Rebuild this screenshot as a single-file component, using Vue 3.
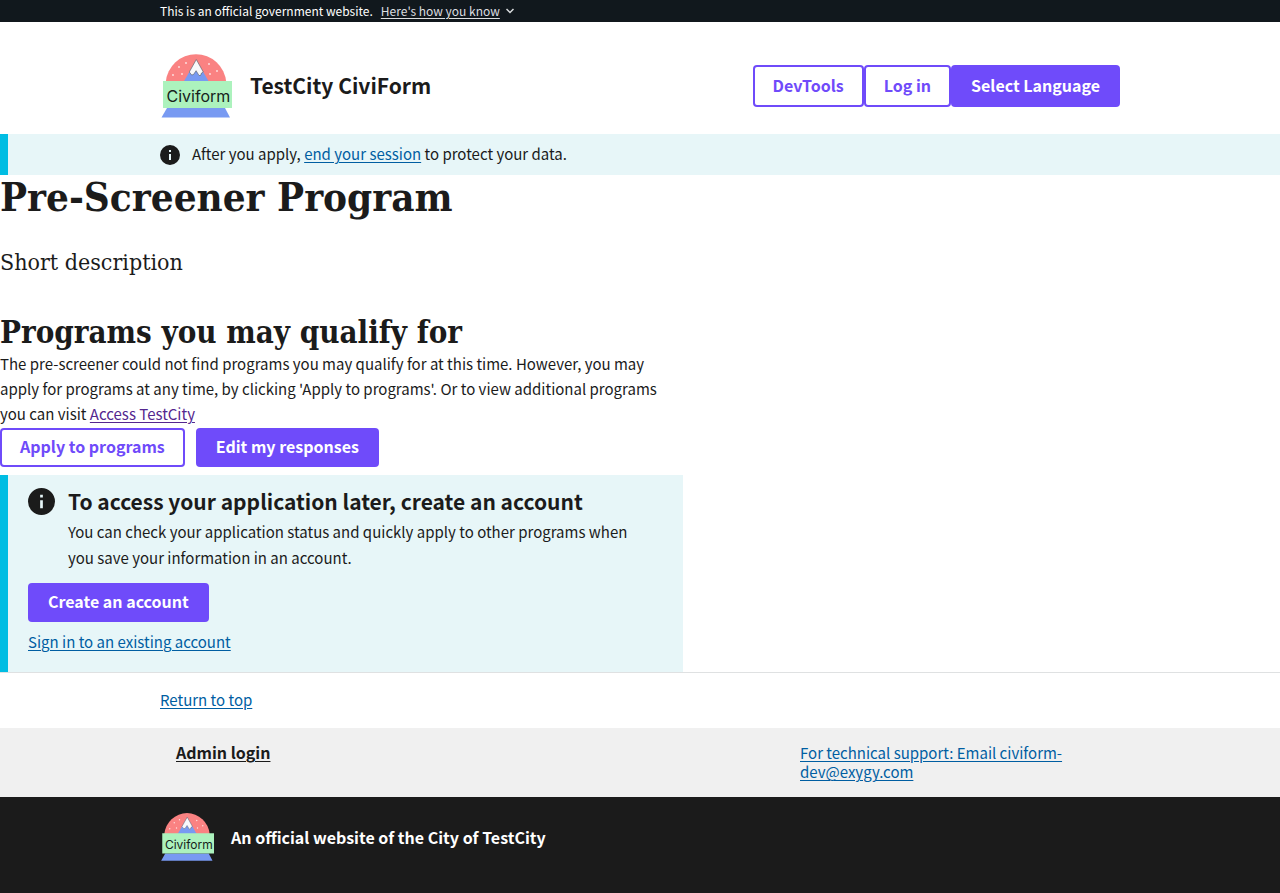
<script setup>
const flakes = [
  [13, 21], [19, 13], [26, 9], [22, 20], [49, 10], [50, 20], [57, 17],
]
</script>

<template>
  <svg class="defs" aria-hidden="true">
    <symbol id="brand" viewBox="0 0 72 64">
      <path fill="#fa8282" d="M5.800 28 A30.300 30.300 0 0 1 66.200 28 Z" />
      <path fill="#789af2" d="M36.300 6 L23.500 28 H49 Z" />
      <path fill="#f8f8fa" stroke="#555a62" stroke-width=".6" d="M36.300 5.500 L29.300 18 L31.700 21 L33.500 20.500 L36.100 16.700 L39 21.500 L40.500 21.500 L41.500 19 L43.300 18 Z" />
      <circle v-for="([x, y], i) in flakes" :key="i" :cx="x" :cy="y" r=".9" fill="#fde4e4" />
      <path fill="#789af2" d="M7 54 H65 L70 63.500 H1.500 Z" />
      <rect x="3" y="27" width="69" height="27" fill="#acf2bd" />
      <text x="6.500" y="47.500" class="brand-word">Civiform</text>
    </symbol>
    <symbol id="info" viewBox="2 2 20 20">
      <path d="M12 2a10 10 0 1 0 0 20 10 10 0 0 0 0-20zm1 15h-2v-6h2v6zm0-8h-2V7h2v2z" />
    </symbol>
  </svg>

  <div id="top" class="page">
    <section class="gov" aria-label="Official government website">
      <div class="wrap gov-in">
        <span>This is an official government website.</span>
        <button type="button" class="gov-btn">
          <u>Here's how you know</u>
          <svg width="8" height="6" viewBox="0 0 8 6" aria-hidden="true"><path d="M.5 1 L4 4.500 L7.500 1" fill="none" stroke="currentColor" stroke-width="1.500" /></svg>
        </button>
      </div>
    </section>

    <header class="wrap head">
      <div class="brand">
        <svg class="logo" role="img" aria-label="Civiform"><use href="#brand" /></svg>
        <strong class="title">TestCity CiviForm</strong>
      </div>
      <nav class="nav">
        <button type="button" class="btn outline tall">DevTools</button>
        <button type="button" class="btn outline tall">Log in</button>
        <button type="button" class="btn tall">Select Language</button>
      </nav>
    </header>

    <div class="notice">
      <div class="wrap notice-in">
        <svg class="info-s" aria-hidden="true"><use href="#info" /></svg>
        <p>After you apply, <a href="#session">end your session</a> to protect your data.</p>
      </div>
    </div>

    <main>
      <h1>Pre-Screener Program</h1>
      <p class="intro">Short description</p>
      <h2>Programs you may qualify for</h2>
      <p class="body-text">
        The pre-screener could not find programs you may qualify for at this time. However, you may
        apply for programs at any time, by clicking 'Apply to programs'. Or to view additional programs
        you can visit <a class="visited" href="#access">Access TestCity</a>
      </p>
      <div class="actions">
        <button type="button" class="btn outline">Apply to programs</button>
        <button type="button" class="btn">Edit my responses</button>
      </div>
      <section class="account">
        <div class="account-top">
          <svg class="info-l" aria-hidden="true"><use href="#info" /></svg>
          <div class="account-text">
            <h3>To access your application later, create an account</h3>
            <p>You can check your application status and quickly apply to other programs when you save your information in an account.</p>
          </div>
        </div>
        <button type="button" class="btn">Create an account</button>
        <a class="signin" href="#signin">Sign in to an existing account</a>
      </section>
    </main>

    <footer>
      <div class="return"><div class="wrap"><a href="#top">Return to top</a></div></div>
      <div class="links">
        <div class="wrap links-in">
          <a class="admin" href="#admin">Admin login</a>
          <a class="support" href="mailto:civiform-dev@exygy.com">For technical support: Email civiform-dev@exygy.com</a>
        </div>
      </div>
      <div class="ident">
        <div class="wrap ident-in">
          <svg class="logo-s" role="img" aria-label="Civiform"><use href="#brand" /></svg>
          <strong>An official website of the City of TestCity</strong>
        </div>
      </div>
    </footer>
  </div>
</template>

<style>
body { margin: 0; background: #fff; }
.brand-word { font: 16px Inter, "Liberation Sans", sans-serif; fill: #17231b; }
</style>

<style scoped>
.defs { position: absolute; width: 0; height: 0; }
.page {
  display: flex;
  flex-direction: column;
  min-height: 100vh;
  color: #1b1b1b;
  font: 15px/19px "Noto Sans CJK SC", "Noto Sans", sans-serif;
}
.page * { box-sizing: border-box; }
p, h1, h2, h3 { margin: 0; }
a { color: #005ea2; }
a, u { text-underline-offset: 2px; text-decoration-thickness: 1px; }
.visited { color: #54278f; }
.wrap { max-width: 1024px; width: 100%; margin: 0 auto; padding: 0 32px; }

.gov { background: #11181d; color: #fff; font-size: 12px; line-height: 22px; }
.gov-in { display: flex; gap: 8px; }
.gov-btn {
  display: flex; align-items: center; gap: 6px;
  padding: 0; border: 0; background: none;
  color: #dcdee0; font: inherit; cursor: pointer;
}

.head { display: flex; align-items: center; justify-content: space-between; padding-top: 32px; padding-bottom: 16px; }
.brand { display: flex; align-items: center; gap: 18px; }
.logo { width: 72px; height: 64px; }
.title { padding-bottom: 2px; font-size: 21px; line-height: 32px; }
.nav { display: flex; }

.btn {
  padding: 0 20px 3px; height: 39px;
  border: 0; border-radius: 4px;
  background: #6f4bfa; color: #fff;
  font: bold 16px/16px "Noto Sans CJK SC", "Noto Sans", sans-serif;
  white-space: nowrap; cursor: pointer;
}
.outline { background: transparent; color: #6f4bfa; box-shadow: inset 0 0 0 2px #6f4bfa; }
.tall { height: 42px; padding-bottom: 2px; }

.notice, .account { background: #e7f6f8; border-left: 8px solid #00bde3; }
.notice { padding: 8px 8px 8px 0; }
.notice-in { display: flex; align-items: center; gap: 12px; line-height: 23px; }
.notice-in p { padding-bottom: 2px; }
.info-s { width: 20px; height: 20px; fill: #1b1b1b; }

h1, h2, .intro { font-family: "DejaVu Serif Condensed", "DejaVu Serif", serif; }
h1 { font-size: 40px; line-height: 44px; }
.intro { margin-top: 24px; font-size: 23px; line-height: 38px; }
h2 { margin-top: 32px; font-size: 31px; line-height: 38px; }
.body-text { max-width: 683px; padding-bottom: 2px; line-height: 25px; }
.actions { display: flex; gap: 11px; margin-bottom: 8px; }
.account { max-width: 683px; padding: 12px 20px 18px; }
.account-top { display: flex; gap: 13px; margin-bottom: 12px; line-height: 26px; }
.account-text { padding-right: 16px; }
.info-l { flex: none; width: 27px; height: 27px; margin-top: 1px; fill: #1b1b1b; }
h3 { margin-bottom: 4px; font-size: 21px; line-height: 28px; }
.signin { display: table; margin-top: 8px; line-height: 24px; }

footer { flex: 1; display: flex; flex-direction: column; }
.return { padding: 15px 0 17px; border-top: 1px solid #dfe1e2; line-height: 23px; }
.links { background: #f0f0f0; padding: 15px 0 16px; }
.links-in { display: grid; grid-template-columns: 2fr 1fr; }
.admin { padding-left: 16px; color: #1b1b1b; font-size: 16px; font-weight: bold; }
.support { padding-right: 16px; }
.ident { flex: 1; background: #1b1b1b; color: #fff; padding: 16px 0 32px; }
.ident-in { display: flex; align-items: center; gap: 17px; font-size: 16px; }
.logo-s { width: 54px; height: 48px; }
</style>
